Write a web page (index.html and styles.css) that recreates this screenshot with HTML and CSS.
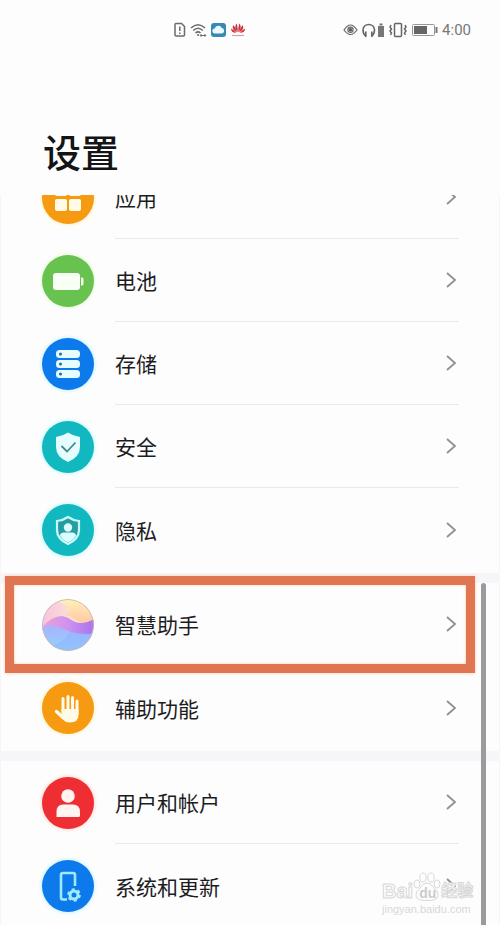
FILE: index.html
```html
<!DOCTYPE html>
<html lang="zh-CN">
<head>
    <meta charset="UTF-8">
    <meta name="viewport" content="width=device-width, initial-scale=1.0">
    <title>设置</title>
    <link rel="stylesheet" href="styles.css">
</head>
<body>
    <!-- shared chevron -->
    <svg class="defs" aria-hidden="true">
        <symbol id="chevron" viewBox="0 0 12 18">
            <path d="M2 2l8 7-8 7" fill="none" stroke="#909090" stroke-width="1.8"/>
        </symbol>
    </svg>

    <header>
        <div class="status">
            <div class="status-left">
                <svg width="12" height="16" viewBox="0 0 12 16" fill="none" stroke="#6c6a6c" stroke-width="1.5">
                    <path d="M1 2.5Q1 1.5 2 1.5H7.500L10.500 4.500V13Q10.500 14 9.500 14H2Q1 14 1 13Z"/>
                    <path d="M5.800 4.500v4.500M5.800 10.500v1.500"/>
                </svg>
                <svg width="17" height="16" viewBox="0 0 17 16" fill="none" stroke="#6c6a6c" stroke-width="1.6">
                    <path d="M1 6Q8 -.5 15 6M3.200 8.500Q8 4 12.800 8.500M5.500 11Q8 8.800 10.500 11"/>
                    <circle cx="8" cy="13" r="1" fill="#6c6a6c" stroke="none"/>
                    <path d="M10.500 13.500h5M11.500 12l-1.500 1.500 1.500 1M14.500 12l1.500 1.500-1.500 1" stroke-width="1"/>
                </svg>
                <svg width="15" height="16" viewBox="0 0 15 16">
                    <rect y="1" width="15" height="14" rx="3" fill="#3589b5"/>
                    <path d="M4 11.500a2.500 2.500 0 0 1-.3-5A3.800 3.800 0 0 1 10.800 6a2.800 2.800 0 0 1 .2 5.500Z" fill="#e9faff"/>
                </svg>
                <svg width="16" height="16" viewBox="0 0 16 16" fill="#c9343f">
                    <path d="M7.700 10.500C4.500 6 5 3 6.800 1.500Q7.800 5 7.700 10.500Z"/>
                    <path d="M8.300 10.500C11.500 6 11 3 9.200 1.500Q8.200 5 8.300 10.500Z"/>
                    <path d="M6.800 10.500C2.500 8 2 5 3.500 3.300Q6.300 6 6.800 10.500ZM9.200 10.500C13.500 8 14 5 12.500 3.300Q9.700 6 9.200 10.500Z"/>
                    <path d="M6 11Q1 10.500 1 6.500Q4.500 8 6 11ZM10 11Q15 10.500 15 6.500Q11.500 8 10 11Z"/>
                    <path d="M2 13.500h12" stroke="#d9a0a4" stroke-width="1.200"/>
                </svg>
            </div>
            <div class="status-right">
                <svg width="15" height="16" viewBox="0 0 15 16" fill="none" stroke="#666" stroke-width="1.200">
                    <path d="M1 8Q7.500 -2 14 8Q7.500 17 1 8Z"/>
                    <circle cx="7.500" cy="7.800" r="2.600"/>
                    <circle cx="7.500" cy="7.800" r="1.200" fill="#444"/>
                </svg>
                <svg width="23" height="16" viewBox="0 0 23 16" fill="none" stroke="#666" stroke-width="1.600">
                    <path d="M3.500 14Q1 12 1 7.500A5.800 5.800 0 0 1 12.500 7.500Q12.500 12 10 14M3.800 9.500V15M9.800 9.500V15"/>
                    <path d="M16 4h6v11h-6zM17.500 1.500h3v2h-3z" fill="#777" stroke="none"/>
                </svg>
                <svg width="18" height="16" viewBox="0 0 18 16" fill="none" stroke="#666" stroke-width="1.500">
                    <rect x="5.500" y="1.500" width="7" height="13" rx="1"/>
                    <path d="M2 3l-1 2 1.500 2L1 9l1.500 2-1 2M16 3l1 2-1.500 2L17 9l-1.500 2 1 2"/>
                </svg>
                <svg width="27" height="16" viewBox="0 0 27 16">
                    <rect x="1.500" y="2.500" width="22" height="11" rx="1" fill="none" stroke="#999"/>
                    <rect x="3" y="4" width="13" height="8" fill="#666"/>
                    <path d="M25.500 5v6" stroke="#777" stroke-width="2"/>
                </svg>
                <span class="time">4:00</span>
            </div>
        </div>
        <h1>设置</h1>
    </header>

    <main class="list">
        <nav class="group">
            <a class="row" href="#apps">
                <svg class="icon orange" viewBox="0 0 52 52" fill="#fffbe6">
                    <rect x="13" y="12" width="12" height="12" rx="2"/>
                    <rect x="27" y="12" width="12" height="12" rx="2"/>
                    <rect x="13" y="27" width="12" height="12" rx="2"/>
                    <rect x="27" y="27" width="12" height="12" rx="2"/>
                </svg>
                <span class="label">应用<svg class="chevron"><use href="#chevron"/></svg></span>
            </a>
            <a class="row" href="#battery">
                <svg class="icon green" viewBox="0 0 52 52" fill="#f8fff5">
                    <rect x="11" y="18" width="27" height="17" rx="3"/>
                    <path d="M39 22.500h1q1.500 0 1.500 1.500v5q0 1.500-1.500 1.500h-1z"/>
                </svg>
                <span class="label">电池<svg class="chevron"><use href="#chevron"/></svg></span>
            </a>
            <a class="row" href="#storage">
                <svg class="icon blue" viewBox="0 0 52 52" fill="#e6fcff">
                    <rect x="14" y="12" width="24" height="8" rx="3.500"/>
                    <rect x="14" y="22" width="24" height="8" rx="3.500"/>
                    <rect x="14" y="32" width="24" height="8" rx="3.500"/>
                    <g fill="#23689f"><circle cx="18.500" cy="16" r="1.500"/><circle cx="18.500" cy="26" r="1.500"/><circle cx="18.500" cy="36" r="1.500"/></g>
                </svg>
                <span class="label">存储<svg class="chevron"><use href="#chevron"/></svg></span>
            </a>
            <a class="row" href="#security">
                <svg class="icon teal" viewBox="0 0 52 52">
                    <path d="M26 11.500Q31 15 38 16V26Q38 36 26 41Q14 36 14 26V16Q21 15 26 11.500Z" fill="#e4fdff"/>
                    <path d="M19.500 25l5.500 5.500 8.500-9" fill="none" stroke="#48888b" stroke-width="1.800"/>
                </svg>
                <span class="label">安全<svg class="chevron"><use href="#chevron"/></svg></span>
            </a>
            <a class="row" href="#privacy">
                <svg class="icon teal" viewBox="0 0 52 52">
                    <path d="M26 13Q31 16.500 37 17V26Q37 35 26 40Q15 35 15 26V17Q21 16.500 26 13Z" fill="#249da3" stroke="#c9fbfc" stroke-width="2.200"/>
                    <circle cx="26" cy="23.500" r="4.200" fill="#dcfdff"/>
                    <path d="M18 32q0-3.500 4-3.500h8q4 0 4 3.500-3 4.500-8 6.500-5-2-8-6.500z" fill="#dcfdff"/>
                </svg>
                <span class="label">隐私<svg class="chevron"><use href="#chevron"/></svg></span>
            </a>
        </nav>

        <nav class="group">
            <a class="row highlight" href="#assistant">
                <svg class="icon" viewBox="0 0 52 52">
                    <defs>
                        <clipPath id="ball"><circle cx="26" cy="26" r="26"/></clipPath>
                        <linearGradient id="sky"><stop stop-color="#f7c4dc"/><stop offset=".5" stop-color="#fbdcd8"/><stop offset="1" stop-color="#ffe6a8"/></linearGradient>
                        <linearGradient id="sun" x2="0" y2="1"><stop stop-color="#fff1b8"/><stop offset="1" stop-color="#ffc4a5"/></linearGradient>
                        <linearGradient id="wave"><stop stop-color="#efa2d8"/><stop offset=".5" stop-color="#cf91ee"/><stop offset="1" stop-color="#a874ee"/></linearGradient>
                        <linearGradient id="sea" x2="0" y2="1"><stop stop-color="#a9b2fa"/><stop offset="1" stop-color="#90d6fd"/></linearGradient>
                    </defs>
                    <g clip-path="url(#ball)">
                        <rect width="52" height="52" fill="url(#sky)"/>
                        <path d="M14 0H52V26Q44 27 36 22Q28 16 22 16Q31 13 24 7Q19 4 14 0Z" fill="url(#sun)"/>
                        <path d="M0 28Q10 17 20 17Q26 18 31 22Q40 27 52 20V40H0Z" fill="url(#wave)"/>
                        <path d="M0 28Q9 24 20 29Q38 38 52 34V52H0Z" fill="url(#sea)"/>
                        <path d="M28 32Q23 43 9 47L15 52H35Q49 47 52 34Q40 36 28 32Z" fill="#8eafff" opacity=".45"/>
                    </g>
                    <circle cx="26" cy="26" r="25.500" fill="none" stroke="#c9b8be"/>
                </svg>
                <span class="label">智慧助手<svg class="chevron"><use href="#chevron"/></svg></span>
            </a>
            <a class="row" href="#accessibility">
                <svg class="icon orange" viewBox="0 0 52 52" fill="none" stroke="#fffbe6" stroke-linecap="round">
                    <path d="M21 16.500V29M26 14.500V29M30.500 15.500V29M35 19V32" stroke-width="3"/>
                    <path d="M14.500 29.500L21 35.500" stroke-width="3.500"/>
                    <path d="M19.500 27H36.500V33Q36.500 40.500 28 40.500Q23 40.500 20.500 37L18 33.500L19.500 33Z" fill="#fffbe6" stroke="none"/>
                </svg>
                <span class="label">辅助功能<svg class="chevron"><use href="#chevron"/></svg></span>
            </a>
        </nav>

        <nav class="group">
            <a class="row" href="#account">
                <svg class="icon red" viewBox="0 0 52 52" fill="#fff4f2">
                    <circle cx="26" cy="19" r="6.800"/>
                    <path d="M14.500 40V35Q14.500 27.500 21 27.500H31Q38 27.500 38 35V38.500Q38 40 36.500 40Z"/>
                </svg>
                <span class="label">用户和帐户<svg class="chevron"><use href="#chevron"/></svg></span>
            </a>
            <a class="row" href="#system">
                <svg class="icon blue" viewBox="0 0 52 52" fill="none" stroke="#9eeaff">
                    <path d="M25 39.500H21Q19 39.500 19 37.500V15Q19 13 21 13H31Q33 13 33 15V26" stroke-width="2.600"/>
                    <circle cx="32" cy="35" r="4" stroke-width="3"/>
                    <circle cx="32" cy="35" r="5.800" stroke-width="2" stroke-dasharray="3 3.070"/>
                </svg>
                <span class="label">系统和更新<svg class="chevron"><use href="#chevron"/></svg></span>
            </a>
        </nav>
        <div class="scrollbar"></div>
    </main>

    <div class="watermark">
        <div class="brand">
            <span>Bai</span>
            <span class="paw">
                <svg width="28" height="30" viewBox="0 0 28 30" fill="#fdfdfd" stroke="#d8d8d8">
                    <ellipse cx="4" cy="12" rx="3" ry="4"/>
                    <ellipse cx="10" cy="5.500" rx="3.200" ry="4.500"/>
                    <ellipse cx="18" cy="5.500" rx="3.200" ry="4.500"/>
                    <ellipse cx="24" cy="12" rx="3" ry="4"/>
                    <path d="M14 11Q18 11 21 16Q26 20 25 24Q24 29 14 28.500Q4 29 3 24Q2 20 7 16Q10 11 14 11Z"/>
                </svg>
                <b>du</b>
            </span>
            <span class="cn">经验</span>
        </div>
        <div class="site">jingyan.baidu.com</div>
    </div>
</body>
</html>
```

FILE: styles.css
```css
* {
    box-sizing: border-box;
}
body {
    margin: 0;
    height: 100vh;
    display: flex;
    flex-direction: column;
    overflow: hidden;
    position: relative;
    background: #fdfdfd;
    color: #1c1c1e;
    font-family: "Noto Sans CJK SC", sans-serif;
}
.defs {
    position: absolute;
    width: 0;
    height: 0;
}
header {
    height: 195px;
    flex: none;
}
.status {
    display: flex;
    justify-content: space-between;
    align-items: center;
    height: 60px;
    padding: 0 29px 0 174px;
}
.status-left, .status-right {
    display: flex;
    align-items: center;
    gap: 4px;
}
.time {
    font-family: Roboto, sans-serif;
    font-size: 15px;
    line-height: 20px;
    color: #777;
}
h1 {
    margin: 63px 43px 0;
    font-size: 38px;
    line-height: 56px;
    font-weight: 500;
    color: #141416;
}

/* the list is scrolled, so the first row is cut by the header */
.list {
    flex: 1;
    overflow: hidden;
    position: relative;
    border-left: 1px solid #f7f5fa;
    border-right: 1px solid #f7f5fa;
}
.group {
    padding-bottom: 2px;
    border-bottom: 10px solid #f6f5f8;
}
.group:first-child {
    margin-top: -39px;
}
.row {
    display: flex;
    align-items: center;
    gap: 21px;
    padding: 0 40px 0 41px;
    color: inherit;
    text-decoration: none;
    position: relative;
}
.icon {
    width: 52px;
    height: 52px;
    flex: none;
    border-radius: 50%;
}
.label {
    flex: 1;
    display: flex;
    justify-content: space-between;
    align-items: center;
    height: 83px;
    font-size: 21px;
    line-height: 30px;
}
.row:not(:last-child) .label {
    border-bottom: 1px solid #e9e9e9;
}
.chevron {
    width: 12px;
    height: 18px;
    margin-right: 2px;
}
.orange {
    background: #f69a12;
    box-shadow: 0 0 4px #ffe9a8;
}
.green {
    background: #68c250;
    box-shadow: 0 0 4px #dcf8c8;
}
.blue {
    background: #0d7aec;
    box-shadow: 0 0 4px #a8ecff;
}
.teal {
    background: #12b8c0;
    box-shadow: 0 0 4px #a4f6fa;
}
.red {
    background: #ee2e33;
    box-shadow: 0 0 4px #ffc4bc;
}
.highlight::after {
    content: "";
    position: absolute;
    z-index: 1;
    top: -7px;
    bottom: -7px;
    left: 4px;
    right: 24px;
    border: 9px solid #e07552;
    box-shadow: 0 0 3px #ffc9a8, inset 0 0 3px #ffc9a8;
}
.scrollbar {
    position: absolute;
    top: 388px;
    bottom: 0;
    right: 13px;
    width: 5px;
    border-radius: 3px 3px 0 0;
    background: #9c9a9c;
}

.watermark {
    position: absolute;
    right: 26px;
    bottom: 9px;
    width: 92px;
    font-family: "Liberation Sans", "Noto Sans CJK SC", sans-serif;
    font-weight: bold;
    color: #fdfdfd;
    -webkit-text-stroke: 1px #d8d8d8;
}
.brand {
    display: flex;
    align-items: flex-end;
    font-size: 20px;
    line-height: 22px;
}
.paw {
    position: relative;
    display: flex;
}
.paw b {
    position: absolute;
    left: 6px;
    bottom: 0;
    font-size: 14px;
    line-height: 18px;
    color: #ccc;
    -webkit-text-stroke: 0;
}
.cn {
    font-size: 16px;
}
.site {
    font-size: 11px;
    line-height: 14px;
    font-weight: normal;
    color: #d8d8d8;
    -webkit-text-stroke: 0;
}
```
